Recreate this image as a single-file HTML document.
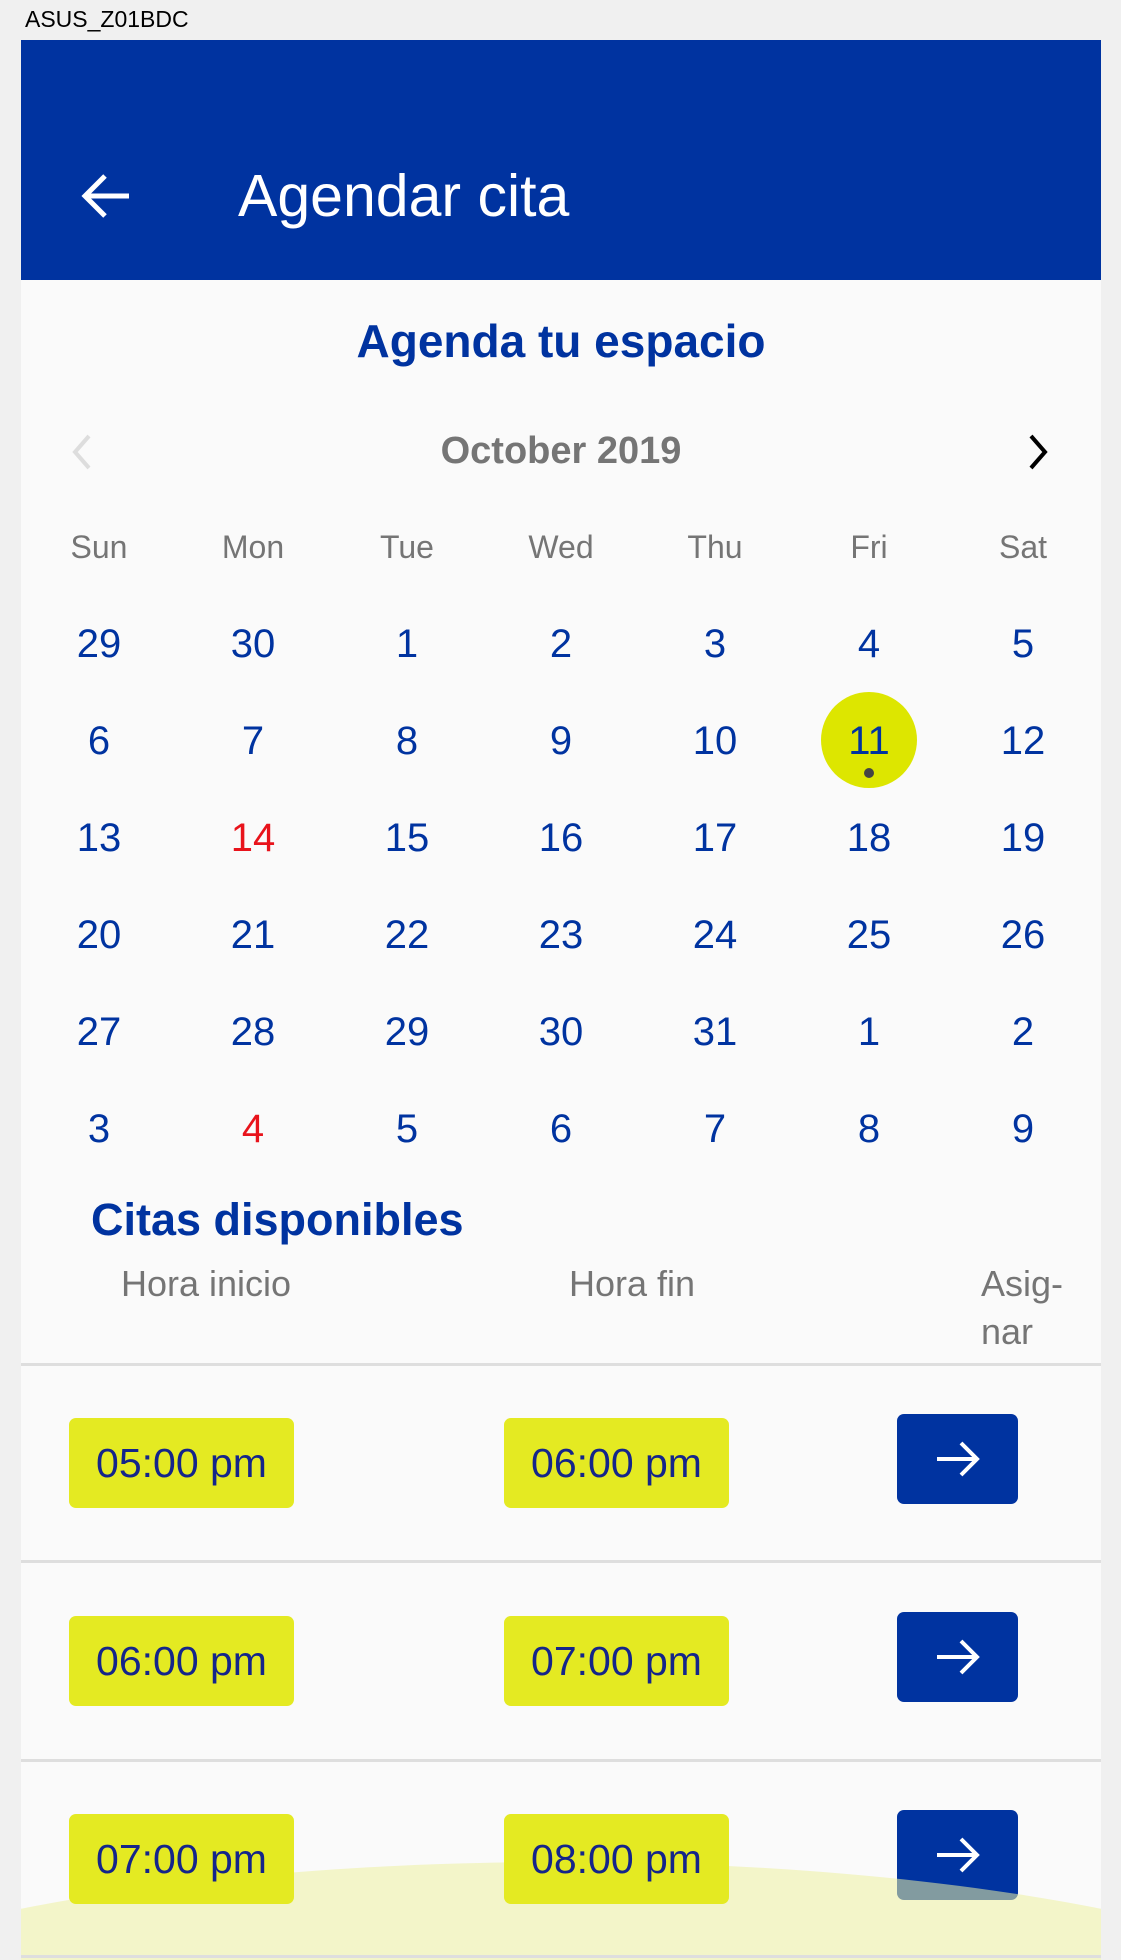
<!DOCTYPE html>
<html><head><meta charset="utf-8"><style>
*{margin:0;padding:0;box-sizing:border-box}
html,body{overflow:hidden}
body{width:1121px;height:1960px;background:#f0f0f0;font-family:"Liberation Sans",sans-serif;position:relative;overflow:hidden}
.a{position:absolute}
.main{left:21px;top:40px;width:1080px;height:1920px;background:#fafafa;overflow:hidden}
.hdr{left:0;top:0;width:1080px;height:240px;background:#0033a0}
.c{text-align:center;width:100px;margin-left:-50px}
.wd{font-size:32px;color:#757575}
.d{font-size:40px;color:#0033a0}
.r{color:#e8131b}
.pill{width:225px;height:90px;background:#e4ea22;border-radius:7px;color:#14258a;font-size:41px;line-height:90px;text-align:center;z-index:2}
.btn{width:121px;height:90px;background:#0033a0;border-radius:7px}
.line{left:0;width:1080px;height:3px;background:#dedede}
.gh{font-size:36px;color:#757575}
</style></head><body>
<div class="a" style="left:25px;top:6px;font-size:23px;color:#000">ASUS_Z01BDC</div>
<div class="a main">
<div class="a hdr">
<svg class="a" style="left:58px;top:132px" width="56" height="48" viewBox="0 0 56 48"><path d="M50 24H6M26 4L6 24L26 44" stroke="#fff" stroke-width="5" fill="none"/></svg>
<div class="a" style="left:217px;top:122px;font-size:59px;color:#fff">Agendar cita</div>
</div>
<div class="a" style="left:0;width:1080px;top:274px;text-align:center;font-size:46px;font-weight:bold;color:#0033a0">Agenda tu espacio</div>
<svg class="a" style="left:48px;top:392px" width="24" height="40" viewBox="0 0 24 40"><path d="M20 4L6 20L20 36" stroke="#ddd" stroke-width="4" fill="none"/></svg>
<svg class="a" style="left:1006px;top:392px" width="24" height="40" viewBox="0 0 24 40"><path d="M4 4L18 20L4 36" stroke="#000" stroke-width="4" fill="none"/></svg>
<div class="a" style="left:0;width:1080px;top:390px;text-align:center;font-size:38px;font-weight:bold;color:#757575">October 2019</div>
<div class="a" style="left:800px;top:652px;width:96px;height:96px;border-radius:50%;background:#dde600"></div>
<div class="a" style="left:843px;top:728px;width:10px;height:10px;border-radius:50%;background:#444"></div>
<div id="cal"></div>
<div class="a" style="left:70px;top:1154px;font-size:45px;font-weight:bold;color:#0033a0">Citas disponibles</div>
<div class="a gh" style="left:100px;top:1223px">Hora inicio</div>
<div class="a gh" style="left:548px;top:1223px">Hora fin</div>
<div class="a gh" style="left:960px;top:1223px">Asig-</div>
<div class="a gh" style="left:960px;top:1271px">nar</div>
<div class="a line" style="top:1323px"></div>
<div class="a pill" style="left:48px;top:1378px">05:00 pm</div>
<div class="a pill" style="left:483px;top:1378px">06:00 pm</div>
<div class="a btn" style="left:876px;top:1374px"><svg width="121" height="90"><path d="M40 45H80M64 29L80 45L64 61" stroke="#fff" stroke-width="4" fill="none"/></svg></div>
<div class="a line" style="top:1520px"></div>
<div class="a pill" style="left:48px;top:1576px">06:00 pm</div>
<div class="a pill" style="left:483px;top:1576px">07:00 pm</div>
<div class="a btn" style="left:876px;top:1572px"><svg width="121" height="90"><path d="M40 45H80M64 29L80 45L64 61" stroke="#fff" stroke-width="4" fill="none"/></svg></div>
<div class="a line" style="top:1719px"></div>
<div class="a pill" style="left:48px;top:1774px">07:00 pm</div>
<div class="a pill" style="left:483px;top:1774px">08:00 pm</div>
<div class="a btn" style="left:876px;top:1770px"><svg width="121" height="90"><path d="M40 45H80M64 29L80 45L64 61" stroke="#fff" stroke-width="4" fill="none"/></svg></div>
<div class="a" style="left:-300px;top:1822px;width:1680px;height:400px;border-radius:50%;background:rgba(236,240,160,0.55);z-index:1"></div>
<div class="a line" style="top:1915px;z-index:3"></div>
</div>
<script>
var xs=[78,232,386,540,694,848,1002];
var wd=["Sun","Mon","Tue","Wed","Thu","Fri","Sat"];
var rows=[[29,30,1,2,3,4,5],[6,7,8,9,10,11,12],[13,14,15,16,17,18,19],[20,21,22,23,24,25,26],[27,28,29,30,31,1,2],[3,4,5,6,7,8,9]];
var h="";
for(var i=0;i<7;i++)h+='<div class="a c wd" style="left:'+xs[i]+'px;top:489px">'+wd[i]+'</div>';
for(var r=0;r<6;r++)for(var i=0;i<7;i++){var red=(i==1&&(r==2||r==5));h+='<div class="a c d'+(red?' r':'')+'" style="left:'+xs[i]+'px;top:'+(582+r*97)+'px">'+rows[r][i]+'</div>';}
document.getElementById("cal").outerHTML=h;
</script>
</body></html>
